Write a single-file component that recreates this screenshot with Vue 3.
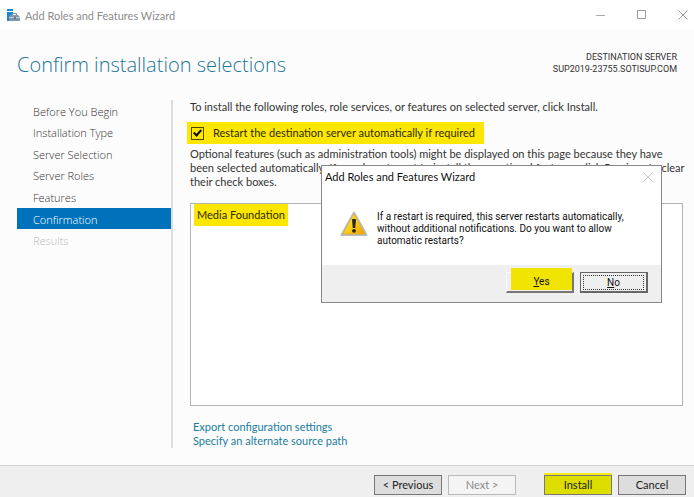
<script setup>
import { ref } from 'vue'

const steps = [
  { name: 'Before You Begin' },
  { name: 'Installation Type' },
  { name: 'Server Selection' },
  { name: 'Server Roles' },
  { name: 'Features' },
  { name: 'Confirmation', current: true },
  { name: 'Results', disabled: true },
]
const restart = ref(true)
</script>

<template>
  <div class="window">
    <header class="titlebar">
      <svg class="app-icon" width="14" height="14" viewBox="0 0 14 14" aria-hidden="true">
        <path d="M0 1h6v2H0z" fill="#1c86d8" />
        <path d="M0 4h6v2L3 8v5H0z" fill="#1c86d8" />
        <path d="M5.500 7V5.500h4V7" fill="none" stroke="#7d8e9b" />
        <path d="M2 9l2-2h7l2 2v4H2z" fill="#8197a6" />
        <path d="M2 9.500h11" stroke="#c7d2da" />
        <path d="M7 9h2v2H7z" fill="#5c7385" />
      </svg>
      <span class="caption">Add Roles and Features Wizard</span>
      <div class="controls">
        <button type="button" aria-label="Minimize">
          <svg width="10" height="10" viewBox="0 0 10 10"><path d="M0 5.500h9" stroke="#aaa" fill="none" /></svg>
        </button>
        <button type="button" aria-label="Maximize">
          <svg width="10" height="10" viewBox="0 0 10 10"><path d="M.5.5h8v8h-8z" stroke="#999" fill="none" /></svg>
        </button>
        <button type="button" aria-label="Close">
          <svg width="10" height="10" viewBox="0 0 10 10"><path d="M.5.5l9 9M9.500.5l-9 9" stroke="#999" fill="none" /></svg>
        </button>
      </div>
    </header>

    <div class="heading">
      <h1>Confirm installation selections</h1>
      <div class="destination">
        <div>DESTINATION SERVER</div>
        <div>SUP2019-23755.SOTISUP.COM</div>
      </div>
    </div>

    <div class="body">
      <nav class="steps">
        <a
          v-for="s in steps"
          :key="s.name"
          href="#"
          class="step"
          :class="{ current: s.current, disabled: s.disabled }"
        >{{ s.name }}</a>
      </nav>

      <main class="content">
        <p class="intro">To install the following roles, role services, or features on selected server, click Install.</p>
        <div class="restart">
          <input id="restart" v-model="restart" type="checkbox" />
          <label for="restart">Restart the destination server automatically if required</label>
        </div>
        <p class="note">
          Optional features (such as administration tools) might be displayed on this page because they have<br />
          been selected automatically. If you do not want to install these optional features, click Previous to clear<br />
          their check boxes.
        </p>
        <div class="selections"><span class="selection">Media Foundation</span></div>
        <div class="links">
          <a href="#">Export configuration settings</a>
          <a href="#">Specify an alternate source path</a>
        </div>
      </main>
    </div>

    <footer class="footer">
      <button type="button" class="btn">&lt; Previous</button>
      <button type="button" class="btn next" disabled>Next &gt;</button>
      <button type="button" class="btn install">Install</button>
      <button type="button" class="btn">Cancel</button>
    </footer>

    <section class="dialog" role="dialog" aria-labelledby="dialog-title">
      <div class="dialog-title">
        <span id="dialog-title">Add Roles and Features Wizard</span>
        <button type="button" aria-label="Close dialog">
          <svg width="10" height="10" viewBox="0 0 10 10"><path d="M.5.5l9 9M9.500.5l-9 9" stroke="#c4c4c4" fill="none" /></svg>
        </button>
      </div>
      <div class="dialog-body">
        <svg class="warning" width="28" height="26" viewBox="0 0 28 26" aria-hidden="true">
          <defs>
            <linearGradient id="warn" x1="0" y1="0" x2="1" y2="1">
              <stop offset="0" stop-color="#fff04a" />
              <stop offset=".5" stop-color="#fcd116" />
              <stop offset="1" stop-color="#ee9a08" />
            </linearGradient>
          </defs>
          <path d="M14 1.500L26.500 24h-25z" fill="#ddd" stroke="#b8babc" stroke-width="2" stroke-linejoin="round" />
          <path d="M14 3L25 23H3z" fill="url(#warn)" stroke="#e4ad13" stroke-width=".7" stroke-linejoin="round" />
          <path d="M12 8.500q2-1.500 4 0L15.200 17h-2.400z" fill="#25251c" />
          <circle cx="14" cy="19.800" r="1.900" fill="#25251c" />
        </svg>
        <p>
          If a restart is required, this server restarts automatically,<br />
          without additional notifications. Do you want to allow<br />
          automatic restarts?
        </p>
      </div>
      <div class="dialog-actions">
        <button type="button" class="classic yes"><span class="mark"><u>Y</u>es</span></button>
        <button type="button" class="classic no"><span class="focus"><u>N</u>o</span></button>
      </div>
    </section>
  </div>
</template>

<style>
body {
  margin: 0;
}
</style>

<style scoped>
.window {
  box-sizing: border-box;
  position: relative;
  display: flex;
  flex-direction: column;
  min-height: 100vh;
  overflow: hidden;
  background: #fcfcfc;
  color: #333;
  font-family: Lato, "Open Sans", sans-serif;
  font-size: 11px;
  line-height: 14px;
}
p, h1 {
  margin: 0;
}
button {
  font: inherit;
  color: inherit;
}
.titlebar {
  display: flex;
  align-items: center;
  height: 29px;
  padding: 0 6px 0 7px;
  background: #fff;
  color: #8c8c8c;
}
.caption {
  flex: 1;
  margin-left: 4px;
  padding-top: 2px;
}
.controls {
  display: flex;
  gap: 31px;
}
.controls button, .dialog-title button {
  display: flex;
  padding: 0;
  border: 0;
  background: none;
}
.heading {
  display: flex;
  justify-content: space-between;
  height: 71px;
  padding: 0 17px;
  box-sizing: border-box;
}
h1 {
  padding-top: 20px;
  color: #1c7698;
  font-family: "Open Sans", sans-serif;
  font-size: 20px;
  font-weight: 300;
  line-height: 32px;
}
.destination {
  padding-top: 22px;
  font-family: Roboto, sans-serif;
  font-size: 9px;
  line-height: 12px;
  text-align: right;
}
.body {
  flex: 1;
  display: flex;
  padding: 0 11px 17px 17px;
}
.steps {
  flex: 0 0 154px;
  display: grid;
  grid-template-rows: repeat(7, 1fr);
  height: 151px;
}
.step {
  display: flex;
  align-items: center;
  padding: 2px 0 0 16px;
  color: #333;
  font-family: "Open Sans", sans-serif;
  font-weight: 300;
  text-decoration: none;
}
.step.current {
  background: #0072bc;
  color: #fff;
}
.step.disabled {
  color: #bbb;
}
.content {
  flex: 1;
  display: flex;
  flex-direction: column;
  min-width: 0;
  padding-left: 17px;
  border-left: 2px solid #ddd;
}
.intro {
  white-space: nowrap;
}
.restart {
  display: flex;
  align-items: center;
  align-self: flex-start;
  gap: 9px;
  height: 22px;
  margin: 8px 0 3px -3px;
  padding: 0 9px 0 4px;
  background: #fde600;
  color: #2d2b00;
}
.restart input {
  appearance: none;
  width: 13px;
  height: 13px;
  margin: 0;
  border: 1px solid #4a4600;
  display: grid;
  place-items: center;
}
.restart input:checked::after {
  content: "";
  width: 3px;
  height: 6px;
  margin-bottom: 2px;
  border: solid #111;
  border-width: 0 2px 2px 0;
  transform: rotate(42deg);
}
.note {
  white-space: nowrap;
}
.selections {
  flex: 1;
  box-sizing: border-box;
  min-height: 120px;
  margin-top: 14px;
  border: 1px solid #b4b4b4;
  background: #fff;
}
.selection {
  display: inline-block;
  margin-left: 3px;
  padding: 4px 3px;
  background: #fde600;
  color: #2d2b00;
}
.links {
  display: flex;
  flex-direction: column;
  align-items: flex-start;
  padding: 14px 0 0 3px;
}
.links a {
  color: #1a7d9e;
  text-decoration: none;
}
.footer {
  display: flex;
  justify-content: flex-end;
  gap: 6px;
  box-sizing: border-box;
  height: 32px;
  padding: 9px 8px 0;
  border-top: 1px solid #d5d5d5;
  background: #efefef;
}
.btn {
  width: 68px;
  height: 20px;
  padding: 0;
  border: 1px solid #777;
  background: #ddd;
  color: #222;
}
.next {
  border-color: #b8babd;
  background: #f4f4f4;
  color: #8b8b8b;
}
.install {
  margin-left: 22px;
  background: #dedd00;
  box-shadow: 0 -2px #f3ec1a;
}
.dialog {
  position: absolute;
  top: 165px;
  left: 321px;
  box-sizing: border-box;
  width: 341px;
  border: 1px solid #888;
  background: #fff;
  color: #111;
}
.dialog-title {
  display: flex;
  align-items: center;
  justify-content: space-between;
  height: 22px;
  padding: 0 8px 0 3px;
}
.dialog-body {
  display: flex;
  gap: 8px;
  height: 77px;
  padding: 23px 0 0 18px;
  box-sizing: border-box;
  font-family: Roboto, sans-serif;
  font-size: 10px;
  line-height: 12px;
  white-space: nowrap;
}
.dialog-body p {
  margin-left: 1px;
}
.dialog-actions {
  display: flex;
  justify-content: flex-end;
  gap: 6px;
  height: 37px;
  padding: 7px 13px 0;
  box-sizing: border-box;
  background: #efefef;
  font-family: Roboto, sans-serif;
  font-size: 10px;
}
.classic {
  display: grid;
  box-sizing: border-box;
  width: 68px;
  height: 21px;
  padding: 0;
  border: solid;
  border-width: 1px 2px 2px 1px;
  border-color: #fafafa #777 #777 #fafafa;
  background: #efefef;
}
.mark {
  margin: -5px 0 1px 4px;
  padding-top: 8px;
  line-height: 12px;
  background: #f0e400;
}
.no {
  border-color: #666;
}
.focus {
  margin: 2px;
  border: 1px dotted #333;
  line-height: 13px;
}
</style>
